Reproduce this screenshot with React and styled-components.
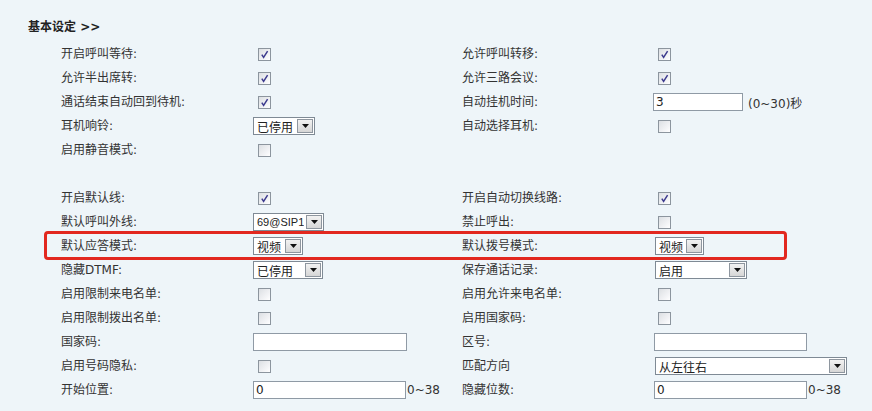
import React from "react";
import styled, { createGlobalStyle } from "styled-components";

const GlobalStyle = createGlobalStyle`
  html, body {
    margin: 0;
    padding: 0;
    background: #eef5f9;
  }
  body {
    font-family: "DejaVu Sans", "Noto Sans CJK SC", sans-serif;
    font-size: 12px;
    color: #333;
  }
`;

const Page = styled.div`
  position: relative;
  width: 872px;
  height: 411px;
  overflow: hidden;
  padding-top: 17px;
  box-sizing: border-box;
`;

const Title = styled.div`
  padding-left: 28px;
  font-weight: bold;
  font-size: 12px;
  line-height: 20px;
  color: #222;
  margin-bottom: 5px;
`;

const Grid = styled.div`
  display: grid;
  grid-template-columns: 192px 209px 191px 1fr;
  grid-auto-rows: 24px;
  padding-left: 61px;
  align-items: center;
`;

const Label = styled.div`
  line-height: 24px;
  white-space: nowrap;
  color: #333;
`;

const Cell = styled.div`
  display: flex;
  align-items: center;
  height: 24px;
  white-space: nowrap;
  padding-left: ${(p) => p.$pl || 0}px;
`;

const Blank = styled.div`
  grid-column: 1 / -1;
`;

const Box = styled.span`
  width: 11px;
  height: 11px;
  margin-left: 5px;
  border: 1px solid #8c959e;
  background: linear-gradient(135deg, #dcdfe3 0%, #f4f5f7 70%, #ffffff 100%);
  display: inline-flex;
  align-items: center;
  justify-content: center;
`;

const SelectBox = styled.div`
  width: ${(p) => p.$w}px;
  height: 18px;
  box-sizing: border-box;
  border: 1px solid #7f8a95;
  background: #fff;
  display: flex;
  align-items: center;
  justify-content: space-between;
  padding: 0 1px 0 3px;
  color: #222;
  font-family: "Liberation Sans", "Noto Sans CJK SC", sans-serif;
  font-size: ${(p) => p.$fs || 12}px;
`;

const SelectText = styled.span`
  overflow: hidden;
`;

const Arrow = styled.span`
  flex: none;
  width: 16px;
  height: 14px;
  box-sizing: border-box;
  border: 1px solid #8e969f;
  background: linear-gradient(#f2f2f2, #d6d6d6);
  display: flex;
  align-items: center;
  justify-content: center;
`;

const TextInput = styled.div`
  width: ${(p) => p.$w}px;
  height: 18px;
  box-sizing: border-box;
  border: 1px solid #8f9aa5;
  background: #fff;
  padding-left: 2px;
  line-height: 16px;
  color: #222;
  margin-left: ${(p) => p.$ml || 0}px;
`;

const Hint = styled.span`
  margin-left: ${(p) => p.$ml}px;
  color: #333;
`;

const Highlight = styled.div`
  position: absolute;
  left: 44px;
  top: 231px;
  width: 743px;
  height: 29px;
  box-sizing: border-box;
  border: 3px solid #e2281f;
  border-radius: 4px;
  pointer-events: none;
`;

function Check({ on }) {
  return (
    <Box>
      {on && (
        <svg width="9" height="9" viewBox="0 0 9 9">
          <path d="M1.8 4.6 L3.6 7.4 L7.6 1.2" fill="none" stroke="#3d3b8e" strokeWidth="1.5" />
        </svg>
      )}
    </Box>
  );
}

function Select({ value, w, fs }) {
  return (
    <SelectBox $w={w} $fs={fs}>
      <SelectText>{value}</SelectText>
      <Arrow>
        <svg width="7" height="4" viewBox="0 0 7 4">
          <path d="M0 0 H7 L3.5 4 Z" fill="#111" />
        </svg>
      </Arrow>
    </SelectBox>
  );
}

const rows = [
  ["开启呼叫等待:", { t: "check", on: true }, "允许呼叫转移:", { t: "check", on: true }],
  ["允许半出席转:", { t: "check", on: true }, "允许三路会议:", { t: "check", on: true }],
  ["通话结束自动回到待机:", { t: "check", on: true }, "自动挂机时间:", { t: "input", v: "3", w: 90, hint: "(0~30)秒", hm: 5 }],
  ["耳机响铃:", { t: "select", v: "已停用", w: 62 }, "自动选择耳机:", { t: "check", on: false }],
  ["启用静音模式:", { t: "check", on: false }, "", null],
  null,
  ["开启默认线:", { t: "check", on: true }, "开启自动切换线路:", { t: "check", on: true }],
  ["默认呼叫外线:", { t: "select", v: "69@SIP1", w: 71, fs: 11 }, "禁止呼出:", { t: "check", on: false }],
  ["默认应答模式:", { t: "select", v: "视频", w: 50 }, "默认拨号模式:", { t: "select", v: "视频", w: 49, ml: 2 }],
  ["隐藏DTMF:", { t: "select", v: "已停用", w: 70 }, "保存通话记录:", { t: "select", v: "启用", w: 92, ml: 2 }],
  ["启用限制来电名单:", { t: "check", on: false }, "启用允许来电名单:", { t: "check", on: false }],
  ["启用限制拨出名单:", { t: "check", on: false }, "启用国家码:", { t: "check", on: false }],
  ["国家码:", { t: "input", v: "", w: 154 }, "区号:", { t: "input", v: "", w: 153, ml: 1 }],
  ["启用号码隐私:", { t: "check", on: false }, "匹配方向", { t: "select", v: "从左往右", w: 192, ml: 2 }],
  ["开始位置:", { t: "input", v: "0", w: 153, hint: "0~38", hm: 1 }, "隐藏位数:", { t: "input", v: "0", w: 153, ml: 1, hint: "0~38", hm: 1 }],
];

function Control({ c }) {
  if (!c) return <Cell />;
  if (c.t === "check") return <Cell><Check on={c.on} /></Cell>;
  if (c.t === "select")
    return (
      <Cell $pl={c.ml}>
        <Select value={c.v} w={c.w} fs={c.fs} />
      </Cell>
    );
  return (
    <Cell>
      <TextInput $w={c.w} $ml={c.ml}>{c.v}</TextInput>
      {c.hint && <Hint $ml={c.hm}>{c.hint}</Hint>}
    </Cell>
  );
}

export default function App() {
  return (
    <Page>
      <GlobalStyle />
      <Title>基本设定 &gt;&gt;</Title>
      <Grid>
        {rows.map((r, i) =>
          r ? (
            <React.Fragment key={i}>
              <Label>{r[0]}</Label>
              <Control c={r[1]} />
              <Label>{r[2]}</Label>
              <Control c={r[3]} />
            </React.Fragment>
          ) : (
            <Blank key={i} />
          )
        )}
      </Grid>
      <Highlight />
    </Page>
  );
}
